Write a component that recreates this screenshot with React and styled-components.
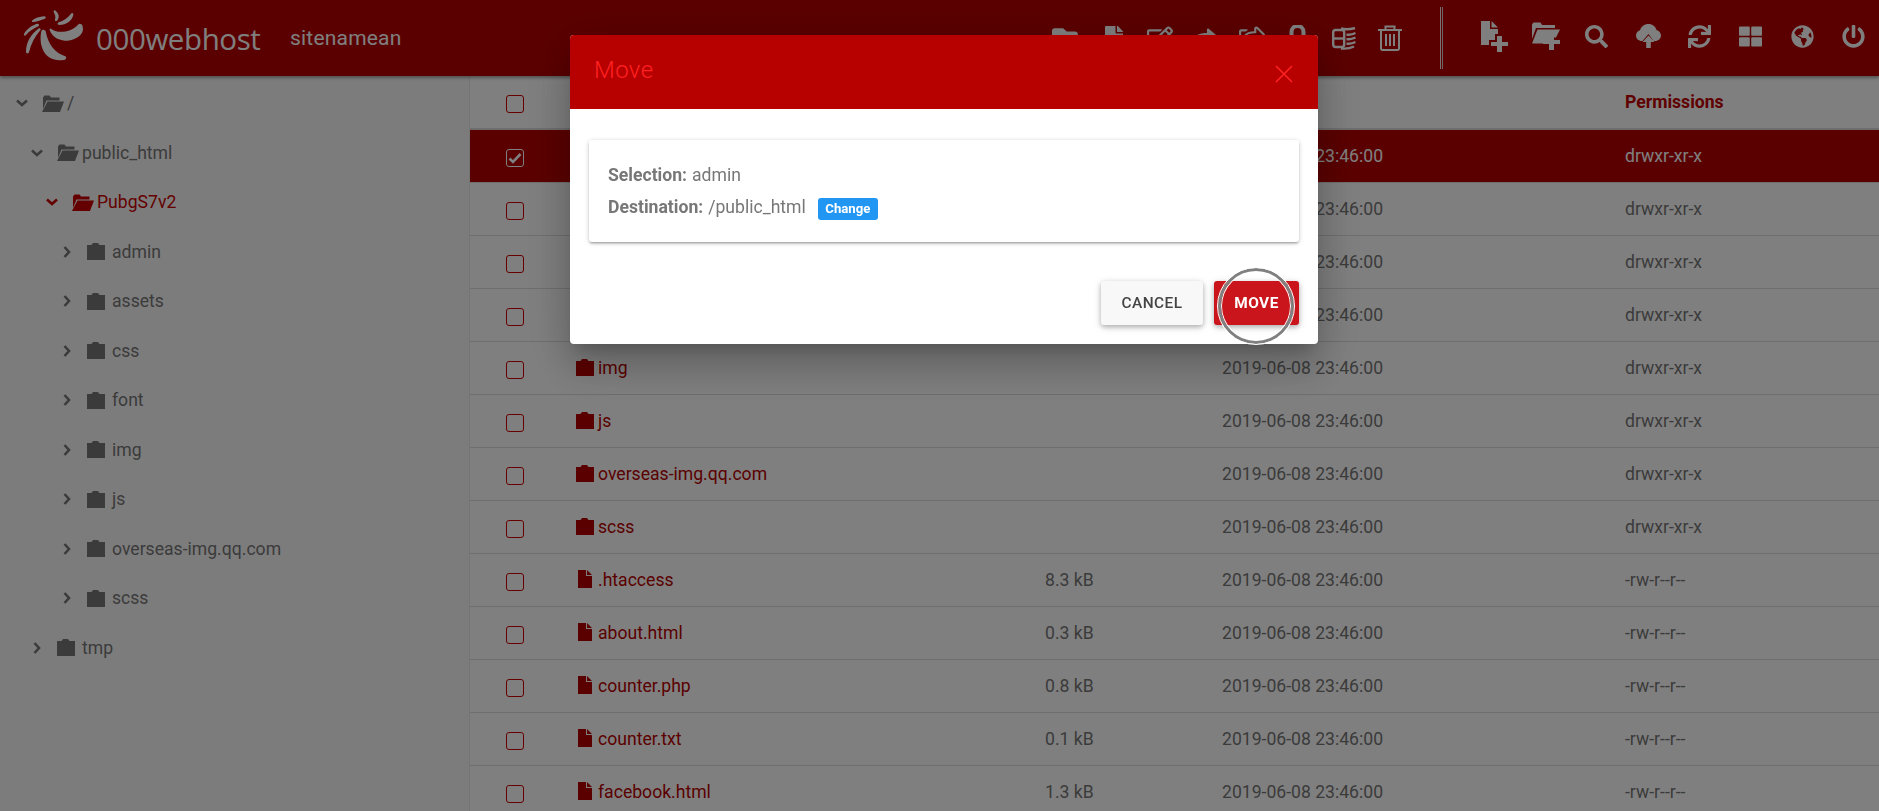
import styled, { createGlobalStyle } from 'styled-components';
import {
  FaFolderOpen,
  FaFile,
  FaRegEdit,
  FaShare,
  FaRegShareSquare,
  FaSearch,
  FaSync,
  FaThLarge,
  FaGlobeAmericas,
  FaPowerOff,
} from 'react-icons/fa';

const GlobalStyle = createGlobalStyle`
  html, body {
    margin: 0;
    height: 100%;
    overflow: hidden;
    background: #fff;
    font-family: Roboto, "Liberation Sans", sans-serif;
    font-size: 17.6px;
    color: #777;
  }
  * { box-sizing: border-box; }
`;

const Page = styled.div`
  display: flex;
  flex-direction: column;
  height: 811px;
  overflow: hidden;
`;

const Header = styled.header`
  display: flex;
  align-items: center;
  flex: 0 0 76px;
  height: 76px;
  background: #b60000;
  color: #fff;
  padding-left: 20px;
  box-shadow: 0 2px 3px rgba(0, 0, 0, 0.35);
  position: relative;
  z-index: 1;
`;

const LogoMark = styled.svg`
  width: 70px;
  height: 60px;
  flex: none;
  margin: -4px 6px 0 0;
`;

const Brand = styled.div`
  font-family: "Open Sans", sans-serif;
  font-size: 29.5px;
  letter-spacing: -0.4px;
  width: 194px;
  flex: none;
  color: #fff;
`;

const SiteName = styled.div`
  font-size: 21px;
  letter-spacing: 0.2px;
  color: #fff;
`;

const ToolGroup = styled.div`
  display: flex;
  align-items: center;
  padding-bottom: ${({ $lift }) => $lift}px;
  margin-left: ${({ $auto }) => ($auto ? 'auto' : '0')};
`;

const ToolSlot = styled.div`
  width: ${({ $w }) => $w}px;
  height: 50px;
  display: flex;
  align-items: center;
  justify-content: center;
  color: #fff;
`;

const ToolDivider = styled.div`
  width: 3px;
  height: 62px;
  margin-left: 27px;
  margin-right: 26px;
  border-left: 1px solid #fff;
  border-right: 1px solid #ddd;
  opacity: 0.9;
`;

const Body = styled.div`
  flex: 1;
  display: flex;
  min-height: 0;
`;

const Sidebar = styled.aside`
  flex: 0 0 470px;
  background: #f9f9f9;
  padding-top: 2.5px;
  border-right: 1px solid #e8e8e8;
`;

const TreeRow = styled.div`
  display: flex;
  align-items: center;
  height: 49.5px;
  padding-left: ${({ $level }) => 16 + $level * 15}px;
  color: ${({ $active }) => ($active ? '#c80000' : '#777')};
`;

const Caret = styled.span`
  flex: 0 0 26px;
  display: flex;
  align-items: center;
  padding-left: ${({ $open }) => ($open ? 0 : 2)}px;
`;

const TreeIcon = styled.span`
  flex: 0 0 25px;
  display: flex;
  align-items: center;
`;

const Main = styled.main`
  flex: 1;
  min-width: 0;
`;

const Row = styled.div`
  display: grid;
  grid-template-columns: 106px 469px 177px 403px 1fr;
  align-items: center;
  height: 53px;
  border-bottom: 1px solid #ddd;
  color: ${({ $selected }) => ($selected ? '#fff' : '#777')};
  background: ${({ $selected }) => ($selected ? '#b60000' : '#fff')};
`;

const HeadRow = styled(Row)`
  height: 54px;
  border-bottom: 2px solid #ddd;
  font-weight: 700;
  font-size: 17.6px;
  color: #c00000;
`;

const CheckCell = styled.div`
  padding-left: 36px;
  padding-top: 3px;
`;

const Check = styled.span`
  display: flex;
  align-items: center;
  justify-content: center;
  width: 18px;
  height: 18px;
  border: 1px solid ${({ $checked }) => ($checked ? '#fff' : '#cc0000')};
  border-radius: 3px;
`;

const NameCell = styled.div`
  display: flex;
  align-items: center;
  color: ${({ $selected }) => ($selected ? '#fff' : '#b60000')};
`;

const NameIcon = styled.span`
  flex: 0 0 22px;
  display: flex;
  padding-left: ${({ $file }) => ($file ? 2 : 0)}px;
  padding-bottom: 2px;
`;

const Overlay = styled.div`
  position: fixed;
  inset: 0;
  z-index: 10;
  background: rgba(0, 0, 0, 0.5);
`;

const Modal = styled.div`
  position: fixed;
  z-index: 11;
  top: 35px;
  left: 570px;
  width: 748px;
  height: 309px;
  background: #fff;
  border-radius: 4px;
  display: flex;
  flex-direction: column;
  box-shadow: 0 24px 38px 3px rgba(0, 0, 0, 0.14), 0 9px 46px 8px rgba(0, 0, 0, 0.12),
    0 11px 15px -7px rgba(0, 0, 0, 0.2);
`;

const ModalHead = styled.div`
  flex: 0 0 74px;
  display: flex;
  align-items: center;
  justify-content: space-between;
  background: #b70000;
  border-radius: 4px 4px 0 0;
  padding: 0 25px 4px 24px;
  color: #ff2222;
`;

const ModalTitle = styled.div`
  font-size: 24px;
  font-weight: 300;
  letter-spacing: 0.4px;
`;

const CloseIcon = styled.svg`
  width: 18px;
  height: 18px;
  margin-top: 8px;
`;

const Card = styled.div`
  margin: 31px 19px 0;
  height: 102px;
  border-radius: 3px;
  background: #fff;
  padding: 19px 19px 0;
  box-shadow: 0 2px 2px 0 rgba(0, 0, 0, 0.14), 0 3px 1px -2px rgba(0, 0, 0, 0.12),
    0 1px 5px 0 rgba(0, 0, 0, 0.2);
`;

const InfoLine = styled.div`
  display: flex;
  align-items: center;
  height: 32px;
  color: #777;
  b {
    font-weight: 700;
    margin-right: 5px;
  }
`;

const Badge = styled.span`
  display: inline-flex;
  align-items: center;
  justify-content: center;
  width: 60px;
  height: 22px;
  margin-left: 12px;
  margin-top: 3px;
  border-radius: 3px;
  background: #2196f3;
  color: #fff;
  font-size: 13.2px;
  font-weight: 700;
`;

const Actions = styled.div`
  display: flex;
  justify-content: flex-end;
  gap: 11px;
  margin: 39px 19px 0;
`;

const Button = styled.button`
  position: relative;
  height: 44px;
  width: ${({ $w }) => $w}px;
  border: none;
  border-radius: 3px;
  font-family: inherit;
  font-size: 15.4px;
  letter-spacing: 0.5px;
  text-transform: uppercase;
  background: ${({ $primary }) => ($primary ? '#c9151b' : '#f8f8f8')};
  color: ${({ $primary }) => ($primary ? '#fff' : '#444')};
  font-weight: ${({ $primary }) => ($primary ? 700 : 500)};
  box-shadow: 0 2px 5px 0 rgba(0, 0, 0, 0.26), 0 2px 10px 0 rgba(0, 0, 0, 0.12);
`;

const FocusRing = styled.span`
  position: absolute;
  left: 4px;
  top: -13px;
  width: 76px;
  height: 76px;
  border-radius: 50%;
  border: 3px solid #808080;
  outline: 1px solid #fff;
  box-shadow: inset 0 0 0 1px #fff;
  pointer-events: none;
`;

const Logo = () => (
  <LogoMark viewBox="0 0 210 180" fill="#fff">
    <path d="M64 75C54 125 78 172 135 161C140 159 140 151 134 150C105 140 85 118 77 76C74 70 66 70 64 75Z" />
    <path d="M93 68C108 82 150 82 174 56C179 51 187 54 188 62C195 88 160 105 135 104C112 103 96 90 89 73C88 69 91 66 93 68Z" />
    <path d="M55 68C35 84 18 105 18 138C18 143 25 144 27 139C33 115 44 92 61 73C64 68 59 65 55 68Z" />
    <path d="M52 53C38 57 21 67 12 84C10 89 15 90 18 87C28 76 41 68 55 61C59 58 57 52 52 53Z" />
    <path d="M72 31C60 32 45 36 36 44C34 48 38 49 41 48C52 45 62 43 75 38C79 36 77 30 72 31Z" />
    <path d="M101 15C100 17 103 22 105 27C107 32 106 37 105 41C104 45 108 46 111 44C120 35 117 22 105 13C103 12 102 13 101 15Z" />
    <path d="M153 23C145 35 130 44 116 49C111 51 112 57 117 57C140 56 157 43 160 26C160 21 155 20 153 23Z" />
  </LogoMark>
);

const ClosedFolder = ({ width = 18 }) => (
  <svg width={width} height={(width * 17) / 18} viewBox="0 0 18 17" fill="currentColor">
    <path d="M6 0h5l1.5 2H18v15H0V2h4.5z" />
  </svg>
);

const OpenFolder = () => (
  <svg width="22" height="17" viewBox="0 0 22 17" fill="currentColor">
    <path d="M1 14V2.500L2.500.5h5L9 2.500h8.500v3H4.500z" />
    <path d="M5.500 6.500H22L18 17H0z" />
  </svg>
);

const FileGlyph = () => (
  <svg width="14" height="18" viewBox="0 0 14 18" fill="currentColor">
    <path d="M0 0h8v6h6v12H0z" />
    <path d="M9 0l5 5H9z" />
  </svg>
);

const ChevronDown = () => (
  <svg width="12" height="8" viewBox="0 0 12 8" fill="none" stroke="currentColor" strokeWidth="2.6">
    <path d="M1 1.500l5 4.500 5-4.500" />
  </svg>
);

const ChevronRight = () => (
  <svg width="8" height="12" viewBox="0 0 8 12" fill="none" stroke="currentColor" strokeWidth="2.6">
    <path d="M1.500 1l4.500 5-4.500 5" />
  </svg>
);

const CheckMark = () => (
  <svg width="14" height="12" viewBox="0 0 14 12" fill="none" stroke="#fff" strokeWidth="2.6">
    <path d="M1.500 6.500l3.500 3.500 7.500-8" />
  </svg>
);

const LockIcon = () => (
  <svg width="23" height="26" viewBox="0 0 23 26" fill="currentColor">
    <path d="M5.500 11V7a6 6 0 0 1 12 0v4" fill="none" stroke="currentColor" strokeWidth="4" />
    <rect y="10" width="23" height="16" rx="2" />
  </svg>
);

const ArchiveIcon = () => (
  <svg width="24" height="23" viewBox="0 0 24 23" fill="none" stroke="currentColor" strokeWidth="2.4">
    <rect x="1.2" y="3" width="11" height="17" rx="2.5" />
    <path d="M1.2 11.500h11" />
    <path d="M9 1.500c5 1.500 9 1 14-.5M14.500 7.500c3 .5 6 0 9-1.500M14.500 12c3 .5 6 0 9-1.500M14.500 16.500c3 .5 6 0 9-1.500M9 21.500c5 .5 9 0 13-2" />
  </svg>
);

const TrashIcon = () => (
  <svg width="24" height="26" viewBox="0 0 24 26" fill="none" stroke="currentColor" strokeWidth="2">
    <path d="M0 5h24" />
    <path d="M7.500 5V1.500h9V5" />
    <path d="M3 5v18.500A1.500 1.500 0 0 0 4.500 25h15a1.500 1.500 0 0 0 1.500-1.500V5" />
    <path d="M8 9v12M12 9v12M16 9v12" />
  </svg>
);

const FilePlus = () => (
  <svg width="27" height="31" viewBox="0 0 27 31" fill="currentColor">
    <path d="M0 0h9v8h8v5h-3v6H8v5H0z" />
    <path d="M10.500 0l6.500 6.500h-6.500z" />
    <path d="M16 15h5v6h6v4h-6v6h-5v-6h-6v-4h6z" />
  </svg>
);

const FolderPlus = () => (
  <svg width="29" height="28" viewBox="0 0 29 28" fill="currentColor">
    <path d="M1 17V2.500L2.500.5h7L11 3h13v3H5z" />
    <path d="M6.500 7.500H29l-4 8h-4v3h-6v3H1z" />
    <path d="M18 12h5v6h6v4h-6v6h-5v-6h-6v-4h6z" />
  </svg>
);

const CloudUp = () => (
  <svg width="25" height="24" viewBox="0 0 25 24" fill="currentColor">
    <path d="M6 17C2.500 17 0 14.500 0 11.500 0 9 1.500 7 4 6.300 5 2.500 8.500 0 12.500 0c4 0 7 2.500 8 6 2.500.8 4.500 3 4.500 5.500 0 3-2.500 5.500-6 5.500h-1.500L12.500 10 6.500 17z" />
    <path d="M12.500 11.500l6 6.500h-3.700v6h-4.600v-6H6.500z" />
  </svg>
);

const leftTools = [
  <FaFolderOpen key="open" size={31} />,
  <FaFile key="file" size={24} />,
  <FaRegEdit key="edit" size={26} />,
  <FaShare key="share" size={23} />,
  <FaRegShareSquare key="sq" size={26} />,
  <LockIcon key="lock" />,
  <ArchiveIcon key="zip" />,
  <TrashIcon key="trash" />,
];

const rightTools = [
  <FilePlus key="fp" />,
  <FolderPlus key="dp" />,
  <FaSearch key="s" size={23} />,
  <CloudUp key="c" />,
  <FaSync key="r" size={23} />,
  <FaThLarge key="t" size={23} />,
  <FaGlobeAmericas key="g" size={23} />,
  <FaPowerOff key="p" size={23} />,
];

const tree = [
  { name: '/', level: 0, open: true },
  { name: 'public_html', level: 1, open: true },
  { name: 'PubgS7v2', level: 2, open: true, active: true },
  { name: 'admin', level: 3 },
  { name: 'assets', level: 3 },
  { name: 'css', level: 3 },
  { name: 'font', level: 3 },
  { name: 'img', level: 3 },
  { name: 'js', level: 3 },
  { name: 'overseas-img.qq.com', level: 3 },
  { name: 'scss', level: 3 },
  { name: 'tmp', level: 1 },
];

const DATE = '2019-06-08 23:46:00';
const DIR_PERM = 'drwxr-xr-x';
const FILE_PERM = '-rw-r--r--';

const files = [
  { name: 'admin', dir: true, selected: true },
  { name: 'assets', dir: true },
  { name: 'css', dir: true },
  { name: 'font', dir: true },
  { name: 'img', dir: true },
  { name: 'js', dir: true },
  { name: 'overseas-img.qq.com', dir: true },
  { name: 'scss', dir: true },
  { name: '.htaccess', size: '8.3 kB' },
  { name: 'about.html', size: '0.3 kB' },
  { name: 'counter.php', size: '0.8 kB' },
  { name: 'counter.txt', size: '0.1 kB' },
  { name: 'facebook.html', size: '1.3 kB' },
];

export default function App() {
  return (
    <Page>
      <GlobalStyle />
      <Header>
        <Logo />
        <Brand>000webhost</Brand>
        <SiteName>sitenamean</SiteName>
        <ToolGroup $auto $lift={0}>
          {leftTools.map((icon) => (
            <ToolSlot key={icon.key} $w={46}>
              {icon}
            </ToolSlot>
          ))}
        </ToolGroup>
        <ToolDivider />
        <ToolGroup $lift={4}>
          {rightTools.map((icon) => (
            <ToolSlot key={icon.key} $w={51.3}>
              {icon}
            </ToolSlot>
          ))}
        </ToolGroup>
      </Header>
      <Body>
        <Sidebar>
          {tree.map((node) => (
            <TreeRow key={node.name} $level={node.level} $active={node.active}>
              <Caret $open={node.open}>{node.open ? <ChevronDown /> : <ChevronRight />}</Caret>
              <TreeIcon>{node.open ? <OpenFolder /> : <ClosedFolder />}</TreeIcon>
              {node.name}
            </TreeRow>
          ))}
        </Sidebar>
        <Main>
          <HeadRow>
            <CheckCell>
              <Check />
            </CheckCell>
            <div>Name</div>
            <div>Size</div>
            <div>Modified</div>
            <div>Permissions</div>
          </HeadRow>
          {files.map((file) => (
            <Row key={file.name} $selected={file.selected}>
              <CheckCell>
                <Check $checked={file.selected}>{file.selected && <CheckMark />}</Check>
              </CheckCell>
              <NameCell $selected={file.selected}>
                <NameIcon $file={!file.dir}>{file.dir ? <ClosedFolder /> : <FileGlyph />}</NameIcon>
                {file.name}
              </NameCell>
              <div>{file.size}</div>
              <div>{DATE}</div>
              <div>{file.dir ? DIR_PERM : FILE_PERM}</div>
            </Row>
          ))}
        </Main>
      </Body>
      <Overlay />
      <Modal>
        <ModalHead>
          <ModalTitle>Move</ModalTitle>
          <CloseIcon viewBox="0 0 18 18" fill="none" stroke="currentColor" strokeWidth="1.6">
            <path d="M1 1l16 16M17 1L1 17" />
          </CloseIcon>
        </ModalHead>
        <Card>
          <InfoLine>
            <b>Selection:</b> admin
          </InfoLine>
          <InfoLine>
            <b>Destination:</b> /public_html
            <Badge>Change</Badge>
          </InfoLine>
        </Card>
        <Actions>
          <Button $w={102}>Cancel</Button>
          <Button $w={85} $primary>
            Move
            <FocusRing />
          </Button>
        </Actions>
      </Modal>
    </Page>
  );
}
